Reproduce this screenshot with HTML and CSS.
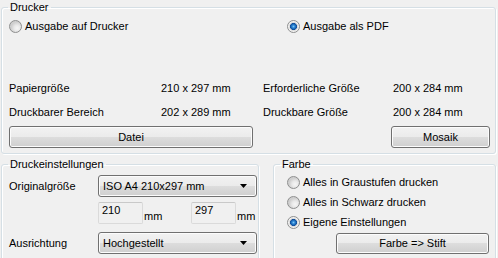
FILE: index.html
```html
<!DOCTYPE html>
<html lang="de">
<head>
  <meta charset="UTF-8" />
  <title>Drucken</title>
  <link rel="stylesheet" href="styles.css">
</head>
<body>
  <fieldset class="group printer">
    <legend>Drucker</legend>
    <div class="output-row">
      <label class="radio"><span class="dot"></span>Ausgabe auf Drucker</label>
      <label class="radio checked"><span class="dot"></span>Ausgabe als PDF</label>
    </div>
    <div class="sizes">
      <span>Papiergröße</span><span>210 x 297 mm</span>
      <span>Erforderliche Größe</span><span>200 x 284 mm</span>
      <span>Druckbarer Bereich</span><span>202 x 289 mm</span>
      <span>Druckbare Größe</span><span>200 x 284 mm</span>
    </div>
    <div class="actions">
      <button class="btn file">Datei</button>
      <button class="btn mosaic">Mosaik</button>
    </div>
  </fieldset>

  <div class="lower">
    <fieldset class="group settings">
      <legend>Druckeinstellungen</legend>
      <div class="row">
        <span class="label">Originalgröße</span>
        <div class="combo"><span>ISO A4 210x297 mm</span><svg class="arrow" width="7" height="4" viewBox="0 0 7 4"><path d="M0 0h7L3.5 4z" fill="#000"/></svg></div>
      </div>
      <div class="row dims">
        <span class="label"></span>
        <div class="field">210</div><span class="unit">mm</span>
        <div class="field">297</div><span class="unit">mm</span>
      </div>
      <div class="row orient">
        <span class="label">Ausrichtung</span>
        <div class="combo"><span>Hochgestellt</span><svg class="arrow" width="7" height="4" viewBox="0 0 7 4"><path d="M0 0h7L3.5 4z" fill="#000"/></svg></div>
      </div>
    </fieldset>

    <fieldset class="group color">
      <legend>Farbe</legend>
      <label class="radio"><span class="dot"></span>Alles in Graustufen drucken</label>
      <label class="radio"><span class="dot"></span>Alles in Schwarz drucken</label>
      <label class="radio checked"><span class="dot"></span>Eigene Einstellungen</label>
      <button class="btn pen">Farbe =&gt; Stift</button>
    </fieldset>
  </div>
</body>
</html>
```

FILE: styles.css
```css
body {
  margin: 0;
  width: 498px;
  height: 258px;
  overflow: hidden;
  background: #f0f0f0;
  font-family: 'Liberation Sans', Arial, sans-serif;
  font-size: 11px;
  line-height: 13px;
  color: #000;
}
.group {
  border: 1px solid #d5dfe5;
  border-radius: 3px;
  box-shadow: inset 1px 1px 0 #fff, 1px 1px 0 #fff;
  min-width: 0;
  box-sizing: border-box;
}
.group legend {
  padding: 0 2px;
  margin-left: -1px;
  line-height: 13px;
}
.printer {
  margin: 1px 2px 0 1px;
  padding: 4px 5px 5px 7px;
}
.output-row {
  display: grid;
  grid-template-columns: 278px 1fr;
}
.radio {
  display: flex;
  align-items: center;
  height: 16px;
}
.dot {
  width: 13px;
  height: 13px;
  box-sizing: border-box;
  margin-right: 3px;
  border-radius: 50%;
  border: 1px solid #8e8f8f;
  background: radial-gradient(circle at 65% 65%, #f6f6f6 0, #e9e9e9 3px, #cfcfcf 6px);
}
.checked .dot {
  background: radial-gradient(circle at 50% 50%, #7ec4f5 0, #2a84d2 1.5px, #0f4e9c 3.2px, #d6d6d6 3.8px, #f2f2f2 5px);
}
.sizes {
  display: grid;
  grid-template-columns: 152px 102px 130px 1fr;
  grid-auto-rows: 24px;
  align-items: center;
  margin-top: 42px;
}
.actions {
  display: flex;
  justify-content: space-between;
  margin-top: 2px;
}
.btn {
  height: 22px;
  padding: 0;
  font: inherit;
  color: #000;
  border: 1px solid #707070;
  border-radius: 3px;
  background: linear-gradient(#f2f2f2 0%, #ebebeb 50%, #dddddd 50%, #cfcfcf 100%);
  box-shadow: inset 0 0 0 1px #fcfcfc;
}
.file { width: 244px; }
.mosaic { width: 99px; }
.lower {
  display: flex;
  gap: 14px;
  margin: 4px 2px 0 1px;
}
.settings {
  width: 258px;
  flex: none;
  margin: 0;
  padding: 4px 1px 8px 7px;
}
.row {
  display: flex;
  align-items: center;
  height: 22px;
}
.label {
  width: 89px;
  flex: none;
}
.combo {
  flex: 1;
  height: 22px;
  box-sizing: border-box;
  display: flex;
  align-items: center;
  justify-content: space-between;
  padding: 0 9px 0 4px;
  border: 1px solid #707070;
  border-radius: 3px;
  background: linear-gradient(#f2f2f2 0%, #ebebeb 50%, #dddddd 50%, #cfcfcf 100%);
  box-shadow: inset 0 0 0 1px #fcfcfc;
}
.dims {
  margin-top: 5px;
  align-items: flex-start;
}
.field {
  flex: none;
  width: 45px;
  height: 22px;
  box-sizing: border-box;
  padding: 1px 3px 0;
  border: 1px solid #dadada;
  border-top-color: #c9c9c9;
  border-radius: 2px;
}
.unit {
  flex: none;
  align-self: flex-end;
  margin: 0 0 1px 1px;
  width: 47px;
}
.unit:last-child {
  width: auto;
}
.orient {
  margin-top: 8px;
}
.color {
  flex: 1;
  margin: 0;
  padding: 3px 6px 8px 7px;
  display: flex;
  flex-direction: column;
  gap: 4px;
}
.color .radio {
  margin-left: 6px;
}
.pen {
  width: 153px;
  height: 21px;
  margin-top: -1px;
  align-self: flex-end;
}
```
